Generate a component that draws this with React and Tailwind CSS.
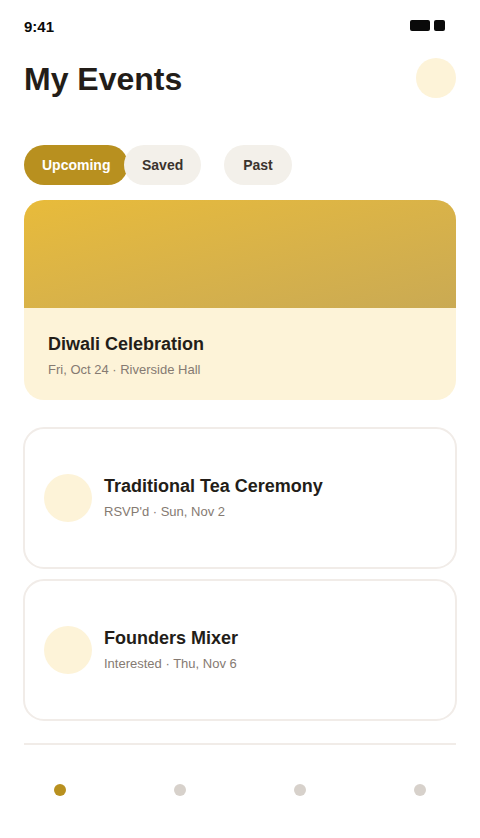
const filters = ["Upcoming", "Saved", "Past"];

const events = [
  { title: "Traditional Tea Ceremony", detail: "RSVP'd · Sun, Nov 2" },
  { title: "Founders Mixer", detail: "Interested · Thu, Nov 6" },
];

const tabs = ["Events", "Discover", "Messages", "Profile"];

function StatusBar() {
  return (
    <div className="flex h-[54px] items-center justify-between pr-[35px] pl-6">
      <span className="text-[15px] leading-5 font-bold text-[#0a0a0a]">9:41</span>
      <div className="flex gap-1 pb-1">
        <span className="h-[11px] w-5 rounded-[2px] bg-[#0a0a0a]" />
        <span className="h-[11px] w-[11px] rounded-[2px] bg-[#0a0a0a]" />
      </div>
    </div>
  );
}

function EventText({ title, detail }) {
  return (
    <div className="flex flex-col gap-1">
      <h2 className="text-lg leading-6 font-bold text-[#231d18]">{title}</h2>
      <p className="text-[13px] leading-5 text-[#857a72]">{detail}</p>
    </div>
  );
}

function FeaturedEvent() {
  return (
    <article className="mx-6 mt-[15px] overflow-hidden rounded-[20px] bg-[#fdf3d8]">
      <div className="h-[108px] bg-linear-to-br from-[#e8bb3a] to-[#caaa53]" />
      <div className="px-6 pt-6 pb-5">
        <EventText title="Diwali Celebration" detail="Fri, Oct 24 · Riverside Hall" />
      </div>
    </article>
  );
}

function EventCard({ title, detail }) {
  return (
    <article className="flex h-[142px] items-center gap-3 rounded-[21px] border-2 border-[#f1ece8] px-[19px]">
      <div className="h-12 w-12 shrink-0 rounded-full bg-[#fdf3d8]" />
      <EventText title={title} detail={detail} />
    </article>
  );
}

export default function App() {
  return (
    <div className="min-h-screen bg-white font-['Liberation_Sans',Arial,sans-serif]">
      <StatusBar />
      <header className="flex items-start justify-between px-6 pt-1">
        <h1 className="text-[32px] leading-[42px] font-bold text-[#231d18]">My Events</h1>
        <button type="button" aria-label="Account" className="h-10 w-10 rounded-full bg-[#fdf3d8]" />
      </header>
      <main>
        <div className="mt-[45px] grid grid-cols-[repeat(3,100px)] px-6">
          {filters.map((name, i) => (
            <button
              key={name}
              type="button"
              aria-pressed={i === 0}
              className={`h-10 w-max min-w-[68px] rounded-full px-[18px] text-sm font-bold ${
                i === 0 ? "bg-[#b8901f] text-white" : "bg-[#f3f0ea] text-[#3a332e]"
              }`}
            >
              {name}
            </button>
          ))}
        </div>
        <FeaturedEvent />
        <div className="mx-[23px] mt-[27px] flex flex-col gap-[10px]">
          {events.map((event) => (
            <EventCard key={event.title} {...event} />
          ))}
        </div>
      </main>
      <hr className="mx-6 mt-[22px] border-t-2 border-[#f1ece8]" />
      <nav className="grid grid-cols-4 pt-[33px]">
        {tabs.map((name, i) => (
          <button key={name} type="button" aria-label={name} className="flex h-6 items-center justify-center">
            <span className={`h-3 w-3 rounded-full ${i === 0 ? "bg-[#b8901f]" : "bg-[#d7d1cb]"}`} />
          </button>
        ))}
      </nav>
    </div>
  );
}
